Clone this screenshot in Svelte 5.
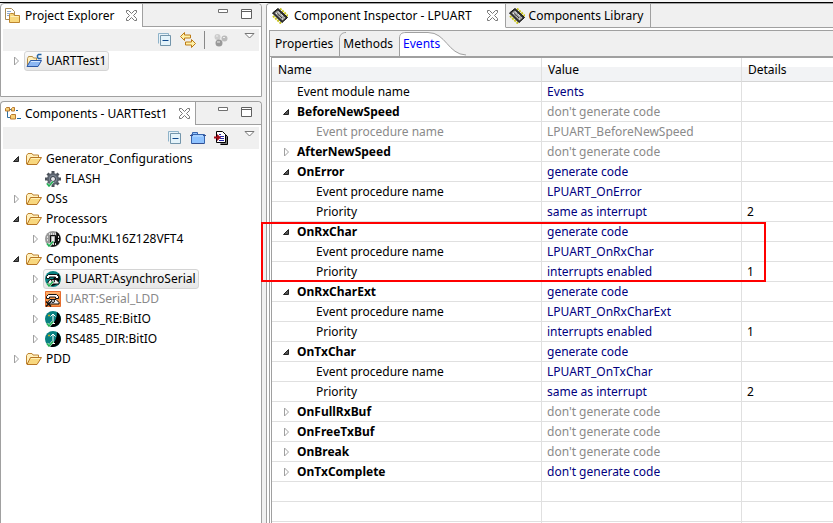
<script>
    let tree = $state([
        { label: 'Generator_Configurations', icon: 'folder', open: true, children: [
            { label: 'FLASH', icon: 'gear', leaf: true }
        ] },
        { label: 'OSs', icon: 'folder', open: false, children: [] },
        { label: 'Processors', icon: 'folder', open: true, children: [
            { label: 'Cpu:MKL16Z128VFT4', icon: 'cpu' }
        ] },
        { label: 'Components', icon: 'folder', open: true, children: [
            { label: 'LPUART:AsynchroSerial', icon: 'phone' },
            { label: 'UART:Serial_LDD', icon: 'ldd', disabled: true },
            { label: 'RS485_RE:BitIO', icon: 'bit' },
            { label: 'RS485_DIR:BitIO', icon: 'bit' }
        ] },
        { label: 'PDD', icon: 'folder', open: false, children: [] }
    ]);

    let events = $state([
        { name: 'BeforeNewSpeed', value: "don't generate code", off: true, open: true, proc: 'LPUART_BeforeNewSpeed' },
        { name: 'AfterNewSpeed', value: "don't generate code", off: true },
        { name: 'OnError', value: 'generate code', open: true, proc: 'LPUART_OnError', priority: 'same as interrupt', details: '2' },
        { name: 'OnRxChar', value: 'generate code', open: true, proc: 'LPUART_OnRxChar', priority: 'interrupts enabled', details: '1' },
        { name: 'OnRxCharExt', value: 'generate code', open: true, proc: 'LPUART_OnRxCharExt', priority: 'interrupts enabled', details: '1' },
        { name: 'OnTxChar', value: 'generate code', open: true, proc: 'LPUART_OnTxChar', priority: 'same as interrupt', details: '2' },
        { name: 'OnFullRxBuf', value: "don't generate code", off: true },
        { name: 'OnFreeTxBuf', value: "don't generate code", off: true },
        { name: 'OnBreak', value: "don't generate code", off: true },
        { name: 'OnTxComplete', value: "don't generate code" }
    ]);

    const marked = 'OnRxChar';
    let selected = $state('LPUART:AsynchroSerial');

    let rows = $derived.by(() => {
        const list = [{ level: 0, name: 'Event module name', value: 'Events' }];
        for (const event of events) {
            list.push({ level: 0, name: event.name, value: event.value, offValue: event.off, event });
            if (!event.open) continue;
            list.push({ level: 1, name: 'Event procedure name', value: event.proc, off: event.off, offValue: event.off });
            if (event.priority) {
                list.push({ level: 1, name: 'Priority', value: event.priority, details: event.details });
            }
        }
        return list;
    });

    let markedRow = $derived(rows.findIndex(row => row.event && row.name === marked));
</script>

{#snippet arrow(open)}
    <svg width="8" height="10" viewBox="0 0 8 10">
        {#if open}
            <path d="M6.5 2.5v5h-5z" fill="#555" stroke="#222" />
        {:else}
            <path d="M2.5 1v8l4-4z" fill="#fff" stroke="#a0a0a0" />
        {/if}
    </svg>
{/snippet}

{#snippet close()}
    <svg width="11" height="11" viewBox="0 0 11 11">
        <path d="M.5.5h2l3 3 3-3h2v2l-3 3 3 3v2h-2l-3-3-3 3h-2v-2l3-3-3-3z" fill="#fff" stroke="#777" />
    </svg>
{/snippet}

{#snippet chip()}
    <svg width="16" height="16" viewBox="0 0 16 16">
        <path d="M1 8l8 7.500M8 .5l8 7.500" stroke="#c9c41c" stroke-width="2" stroke-dasharray="2 1" />
        <path d="M.5 5L6 .5l9.500 9L10 14.500z" fill="#333" stroke="#111" />
        <path d="M2.500 5L5.500 2.500l8 7.500-3 2.500z" fill="#a0a0a0" />
        <path d="M4 5l7 6.500M6 3.500l6.500 6" stroke="#eee" stroke-dasharray="3 1" />
        <path d="M5 5.500l5 4.500" stroke="#333" />
    </svg>
{/snippet}

{#snippet collapseIcon()}
    <svg width="14" height="14" viewBox="0 0 14 14">
        <path d="M.5 10.500V.5h10v2" fill="#e8f2f8" stroke="#8fb3c9" />
        <path d="M2.500 2.500h10v10h-10z" fill="#e4f3fa" stroke="#7395ab" />
        <path d="M4.500 7.500h6" stroke="#124a8c" />
    </svg>
{/snippet}

{#snippet menuIcon()}
    <svg width="11" height="6" viewBox="0 0 11 6">
        <path d="M1 .5h9L5.500 5z" fill="#fff" stroke="#777" />
    </svg>
{/snippet}

{#snippet windowButtons()}
    <div class="window-buttons">
        <button aria-label="Minimize">
            <svg width="10" height="4" viewBox="0 0 10 4"><path d="M.5.5h9v3h-9z" fill="#fff" stroke="#707070" /></svg>
        </button>
        <button aria-label="Maximize">
            <svg width="11" height="10" viewBox="0 0 11 10"><path d="M.5.5h10v9H.5zM.5 2.500h10" fill="#fff" stroke="#606060" /></svg>
        </button>
    </div>
{/snippet}

{#snippet check()}
    <path d="M2 12.500l2 2.500 4-4.500" fill="none" stroke="#e8f5ec" stroke-width="2.500" />
    <path d="M2 12.500l2 2.500 4-4.500" fill="none" stroke="#1fae52" stroke-width="1.500" />
{/snippet}

{#snippet handset()}
    <path d="M1.500 7.500V5.500l2-2h8l2 2v2h-3v-1.500h-6v1.500z" fill="#fff" stroke="#111" />
    <path d="M5 8.500h6l3 3v1.500H3v-2z" fill="#f2f2f2" stroke="#111" />
    <circle cx="8" cy="10" r="1.500" fill="#fff" stroke="#111" />
{/snippet}

{#snippet icon(name)}
    <svg width="16" height="16" viewBox="0 0 16 16">
        {#if name === 'folder'}
            <path d="M.5 13V4.500l1.500-2h4l1 1.500h5.500v3" fill="#fff0bd" stroke="#bf8532" />
            <path d="M1 13.500L4.500 6.500h11L11 13.500z" fill="#f8d87f" stroke="#b87624" />
            <path d="M5 7.500h9" stroke="#fff0b5" />
        {:else if name === 'gear'}
            <g stroke="#4b5159" stroke-width="3">
                <path d="M8 0v16M0 8h16M2.500 2.500l11 11M13.500 2.500l-11 11" />
            </g>
            <circle cx="8" cy="8" r="5" fill="#7d8794" stroke="#5a626d" stroke-width="2" />
            <circle cx="8" cy="8" r="2.500" fill="#e8eaee" stroke="#343a42" />
            {@render check()}
        {:else if name === 'cpu'}
            <circle cx="8" cy="8" r="8" fill="#999" />
            <path d="M11 .6a8 8 0 0 1-6 14.800C10 13 12 7 11 .6z" fill="#111" />
            <path d="M4 3h8M4 13h8M2 6h2M2 9h2M13 6h1M13 9h1" stroke="#ddd" stroke-dasharray="1 1" stroke-width="2" />
            <path d="M5.500 4.500h5v7h-5z" fill="#777" stroke="#111" />
            <path d="M6.500 5.500h3v5h-3z" fill="#eee" />
            {@render check()}
        {:else if name === 'phone'}
            <circle cx="8" cy="8" r="8" fill="#078080" />
            <path d="M13.500 2.500a8 8 0 0 1-11 11z" fill="#000" />
            {@render handset()}
            {@render check()}
        {:else if name === 'ldd'}
            <path d="M.5.5h15v15H.5z" fill="#f79447" stroke="#e56d2e" />
            <path d="M1 1h14v2H1z" fill="#ffb06c" />
            {@render handset()}
            <path d="M1 10.500l5 5M6 10.500l-5 5" stroke="#111" stroke-width="1.500" />
        {:else if name === 'bit'}
            <circle cx="8" cy="8" r="8" fill="#078080" />
            <path d="M12 1.100A8 8 0 0 1 5 15.400C10 12 12 7 12 1.100z" fill="#000" />
            <path d="M8 12.500V3M5.500 5.500L8 3l2.500 2.500M7 12.500h3" fill="none" stroke="#fff" />
            <path d="M3 4.500h2M4 3.500v2" stroke="#b6a829" />
            {@render check()}
        {:else if name === 'project'}
            <path d="M1.500 12V5.500l1-2h4l1 1.500h3v2" fill="#fff0bd" stroke="#b48d45" />
            <path d="M1 13.500L4.500 7.500h11L12 13.500z" fill="#8db8f3" stroke="#2b58a6" />
            <path d="M5 8.500h9" stroke="#d5e8ff" />
            <path d="M15.500 1.500h-3l-1 1v2l1 1h3" fill="none" stroke="#2364a5" stroke-width="1.500" />
        {:else if name === 'explorer'}
            <path d="M.5.5h6l3 3v8h-9z" fill="#fff" stroke="#a98c56" />
            <path d="M2 3.500h4M2 5.500h3M2 7.500h2" stroke="#8ba8d0" />
            <path d="M4.500 14.500v-8l1-1h3l1 2h5v7z" fill="#f9d97e" stroke="#bd862f" />
            <path d="M5.500 8.500h8" stroke="#fff1bc" />
        {:else if name === 'components'}
            <path d="M2.500 5v6.500H7M5 3.500h3" fill="none" stroke="#3170a0" />
            <path d="M.5 2.500l1-1h3v3.500h-4zM6.500 2.500l1-1h2v3.500h-3zM5.500 9.500l1-1h4v4.500h-5z" fill="#f7d179" stroke="#b87930" />
            <path d="M11 4.500h2M12 12.500h4" stroke="#1b659f" />
        {/if}
    </svg>
{/snippet}

<div class="workbench">
    <aside>
        <section class="view">
            <header>
                <div class="view-tab">
                    {@render icon('explorer')}
                    <span>Project Explorer</span>
                    <button aria-label="Close Project Explorer">{@render close()}</button>
                </div>
                {@render windowButtons()}
            </header>
            <div class="toolbar">
                <button aria-label="Collapse All">{@render collapseIcon()}</button>
                <button aria-label="Link with Editor">
                    <svg width="16" height="16" viewBox="0 0 16 16">
                        <path d="M.5 4.500l4-4v2.500h6v3h-6v2.500z" fill="#fff2a8" stroke="#bd7b16" />
                        <path d="M15.500 11.500l-4-4v2.500h-6v3h6v2.500z" fill="#fff2a8" stroke="#bd7b16" />
                    </svg>
                </button>
                <span class="separator"></span>
                <button aria-label="Focus on Active Task" disabled>
                    <svg width="14" height="14" viewBox="0 0 14 14">
                        <circle cx="3.500" cy="4" r="3" fill="#ccc" />
                        <circle cx="10.500" cy="5.500" r="3" fill="#bbb" />
                        <circle cx="5" cy="10" r="3.500" fill="#999" />
                        <path d="M2 3h2M9 4.500h2M3 9h3" stroke="#eee" />
                    </svg>
                </button>
                <button class="menu" aria-label="View Menu">{@render menuIcon()}</button>
            </div>
            <ul class="tree">
                <li>
                    <div class="node">
                        <button class="twisty" aria-label="Expand UARTTest1">{@render arrow(false)}</button>
                        <button class="item selected">{@render icon('project')}<span>UARTTest1</span></button>
                    </div>
                </li>
            </ul>
        </section>

        <section class="view fill">
            <header>
                <div class="view-tab">
                    {@render icon('components')}
                    <span>Components - UARTTest1</span>
                    <button aria-label="Close Components">{@render close()}</button>
                </div>
                {@render windowButtons()}
            </header>
            <div class="toolbar">
                <button aria-label="Collapse All">{@render collapseIcon()}</button>
                <button aria-label="Open Folder">
                    <svg width="16" height="14" viewBox="0 0 16 14">
                        <path d="M2.500 3V1.500h5V3M1.500 3.500h13v9h-13z" fill="#8fc3ff" stroke="#3764ad" />
                        <path d="M0 4.500h3M13 4.500h3M2 12.500h12" stroke="#334f91" />
                        <path d="M3 5h10" stroke="#c2e1ff" />
                    </svg>
                </button>
                <button aria-label="Generate Code">
                    <svg width="14" height="14" viewBox="0 0 14 14">
                        <path d="M5.500 3.500V2.500h5l3 3v8h-7" fill="#777" stroke="#000" />
                        <path d="M2.500.5h6l3 3v8h-9z" fill="#fff" stroke="#000" />
                        <path d="M5 3.500h2M6 5.500h4M6 7.500h4M5 9.500h5" stroke="#2929a5" />
                        <path d="M0 5.500h3V3l4 3.500L3 10V7.500H0z" fill="#a40d1b" />
                    </svg>
                </button>
                <button class="menu" aria-label="View Menu">{@render menuIcon()}</button>
            </div>
            <ul class="tree">
                {#each tree as group}
                    <li>
                        <div class="node">
                            <button class="twisty" aria-label="Toggle {group.label}" onclick={() => group.open = !group.open}>{@render arrow(group.open)}</button>
                            <button class="item" class:selected={selected === group.label} onclick={() => selected = group.label}>
                                {@render icon(group.icon)}<span>{group.label}</span>
                            </button>
                        </div>
                        {#if group.open}
                            <ul>
                                {#each group.children as child}
                                    <li class="node">
                                        {#if child.leaf}
                                            <span class="twisty"></span>
                                        {:else}
                                            <button class="twisty" aria-label="Expand {child.label}">{@render arrow(false)}</button>
                                        {/if}
                                        <button class="item" class:off={child.disabled} class:selected={selected === child.label} onclick={() => selected = child.label}>
                                            {@render icon(child.icon)}<span>{child.label}</span>
                                        </button>
                                    </li>
                                {/each}
                            </ul>
                        {/if}
                    </li>
                {/each}
            </ul>
        </section>
    </aside>

    <main>
        <header class="editor-tabs">
            <div class="editor-tab active">
                {@render chip()}
                <span>Component Inspector - LPUART</span>
                <button aria-label="Close Component Inspector">{@render close()}</button>
            </div>
            <button class="editor-tab">
                {@render chip()}
                <span>Components Library</span>
            </button>
        </header>
        <div class="editor">
            <nav>
                <button class="page">Properties</button>
                <svg class="edge" width="7" height="24" viewBox="0 0 7 24">
                    <path d="M.5 24V7C.5 3 3 .5 7 .5" fill="none" stroke="#a0a0a0" />
                </svg>
                <button class="page">Methods</button>
                <button class="page current">
                    <svg width="68" height="24" viewBox="0 0 68 24">
                        <path d="M.5 24V6C.5 2 3 .5 7 .5h22c18 0 20 22 38 22.500V24z" fill="#fff" />
                        <path d="M.5 24V6C.5 2 3 .5 7 .5h22c18 0 20 22 38 22.500" fill="none" stroke="#a0a0a0" />
                    </svg>
                    <span>Events</span>
                </button>
            </nav>
            <div class="grid">
                <table>
                    <colgroup>
                        <col class="name-col">
                        <col class="value-col">
                        <col>
                    </colgroup>
                    <thead>
                        <tr><th>Name</th><th>Value</th><th>Details</th></tr>
                    </thead>
                    <tbody>
                        {#each rows as row}
                            <tr>
                                <td class:off={row.off}>
                                    <div class="name" class:nested={row.level === 1} class:event={row.event}>
                                        {#if row.event}
                                            <button class="twisty" aria-label="Toggle {row.name}" disabled={!row.event.proc} onclick={() => row.event.open = !row.event.open}>{@render arrow(row.event.open)}</button>
                                        {/if}
                                        <span>{row.name}</span>
                                    </div>
                                </td>
                                <td class="value" class:off={row.offValue}>{row.value}</td>
                                <td>{row.details ?? ''}</td>
                            </tr>
                        {/each}
                        {#each Array(3) as _}
                            <tr><td></td><td></td><td></td></tr>
                        {/each}
                    </tbody>
                </table>
                <div class="marker" style="top: {24 + markedRow * 20}px"></div>
            </div>
        </div>
    </main>
</div>

<style>
    :global(body) {
        margin: 0;
        background: #f0f0f0;
    }

    .workbench {
        display: grid;
        grid-template-columns: 262px 1fr;
        column-gap: 4px;
        box-sizing: border-box;
        height: 100vh;
        overflow: hidden;
        padding-top: 3px;
        background: linear-gradient(#f5f5f5 2px, #000 2px, #000 3px, #f0f0f0 3px);
        font-family: "Noto Sans", "Open Sans", sans-serif;
        font-size: 12px;
        line-height: 20px;
        color: #000;
        white-space: nowrap;
    }

    button {
        display: flex;
        align-items: center;
        padding: 0;
        border: 0;
        background: none;
        font: inherit;
        color: inherit;
    }

    svg {
        display: block;
        flex: none;
    }

    aside {
        display: flex;
        flex-direction: column;
        gap: 4px;
        min-height: 0;
    }

    .view {
        box-sizing: border-box;
        min-height: 94px;
        border: 1px solid #a0a0a0;
        border-radius: 4px 4px 0 0;
        background: #fff;
    }

    .fill {
        flex: 1;
        border-bottom: 0;
    }

    .view > header {
        display: flex;
        height: 23px;
    }

    .view-tab {
        display: flex;
        align-items: center;
        gap: 4px;
        padding: 0 5px 0 4px;
    }

    .view-tab button {
        margin-left: 7px;
    }

    .window-buttons {
        display: flex;
        flex: 1;
        justify-content: flex-end;
        align-items: flex-start;
        gap: 13px;
        padding: 5px 9px 0 0;
        border-left: 1px solid #a0a0a0;
        border-bottom: 1px solid #a0a0a0;
        border-top-right-radius: 4px;
        background: #f0f0f0;
    }

    .toolbar {
        display: flex;
        align-items: center;
        justify-content: flex-end;
        gap: 8px;
        height: 22px;
        margin: 2px 2px 0;
        padding-right: 4px;
        background: #f0f0f0;
    }

    .separator {
        width: 1px;
        height: 18px;
        margin: 0 1px 0 0;
        background: #888;
    }

    .toolbar .menu {
        align-self: flex-start;
        margin: 4px 0 0 8px;
    }

    ul {
        margin: 0;
        padding: 0;
        list-style: none;
    }

    .tree {
        padding-left: 11px;
    }

    .tree ul {
        padding-left: 19px;
    }

    .node {
        display: flex;
        align-items: center;
        height: 20px;
    }

    .twisty {
        width: 12px;
        flex: none;
    }

    .item {
        box-sizing: border-box;
        height: 20px;
        gap: 4px;
        padding: 0 2px 0 1px;
        border: 1px solid transparent;
        border-radius: 3px;
    }

    .item.selected {
        border-color: #d4d4d4;
        background: linear-gradient(#fafafa, #e6e6e6);
    }

    .off {
        color: #8a8a8a;
    }

    main {
        display: flex;
        flex-direction: column;
        min-width: 0;
        border-left: 1px solid #a0a0a0;
        border-top: 1px solid #a0a0a0;
        border-top-left-radius: 4px;
        background: #fff;
    }

    .editor-tabs {
        display: flex;
        height: 24px;
        background: #f0f0f0;
        border-top-left-radius: 4px;
    }

    .editor-tabs::after {
        content: "";
        flex: 1;
        border-bottom: 1px solid #a0a0a0;
    }

    .editor-tab {
        display: flex;
        align-items: center;
        gap: 4px;
        padding: 0 7px 0 3px;
        border-right: 1px solid #a0a0a0;
        border-bottom: 1px solid #a0a0a0;
    }

    .editor-tab.active {
        gap: 6px;
        padding-left: 5px;
        border-bottom-color: #fff;
        background: #fff;
        border-top-left-radius: 4px;
    }

    .editor-tab.active button {
        margin-left: 9px;
    }

    .editor {
        flex: 1;
        min-height: 0;
        margin: 2px 0 0 2px;
        border-left: 1px solid #a0a0a0;
        border-top: 1px solid #a0a0a0;
    }

    nav {
        display: flex;
        height: 24px;
        padding: 1px 0 0 5px;
        border-bottom: 1px solid #a0a0a0;
        background: #f0f0f0;
    }

    .edge {
        margin: 0 -3px 0 6px;
    }

    .page.current {
        position: relative;
        margin-left: 6px;
        padding-left: 4px;
        color: #00f;
    }

    .page.current svg {
        position: absolute;
        left: 0;
        top: 0;
    }

    .page.current span {
        position: relative;
    }

    .grid {
        position: relative;
        border-left: 1px solid #a0a0a0;
        border-top: 1px solid #a0a0a0;
        margin-left: 1px;
    }

    table {
        width: 100%;
        table-layout: fixed;
        border-collapse: separate;
        border-spacing: 0;
    }

    .name-col {
        width: 270px;
    }

    .value-col {
        width: 200px;
    }

    th,
    td {
        box-sizing: border-box;
        height: 20px;
        padding: 0 5px;
        border-right: 1px solid #e0e0e0;
        border-bottom: 1px solid #e0e0e0;
        font-weight: 400;
        line-height: 19px;
        text-align: left;
    }

    th {
        height: 24px;
        padding: 0 6px;
        border-bottom-color: #d5d5d5;
        background: linear-gradient(#fff 40%, #f2f3f5 40%);
    }

    th:last-child,
    td:last-child {
        border-right: 0;
    }

    .value {
        color: #000080;
    }

    .value.off {
        color: #8a8a8a;
    }

    .name {
        display: flex;
        align-items: center;
        padding-left: 20px;
    }

    .name.event {
        padding-left: 5px;
        font-weight: 700;
    }

    .name.event .twisty {
        width: 15px;
    }

    .name.nested {
        padding-left: 39px;
    }

    .marker {
        position: absolute;
        left: -11px;
        box-sizing: border-box;
        width: 505px;
        height: 60px;
        border: 2px solid #f00;
        pointer-events: none;
    }
</style>
